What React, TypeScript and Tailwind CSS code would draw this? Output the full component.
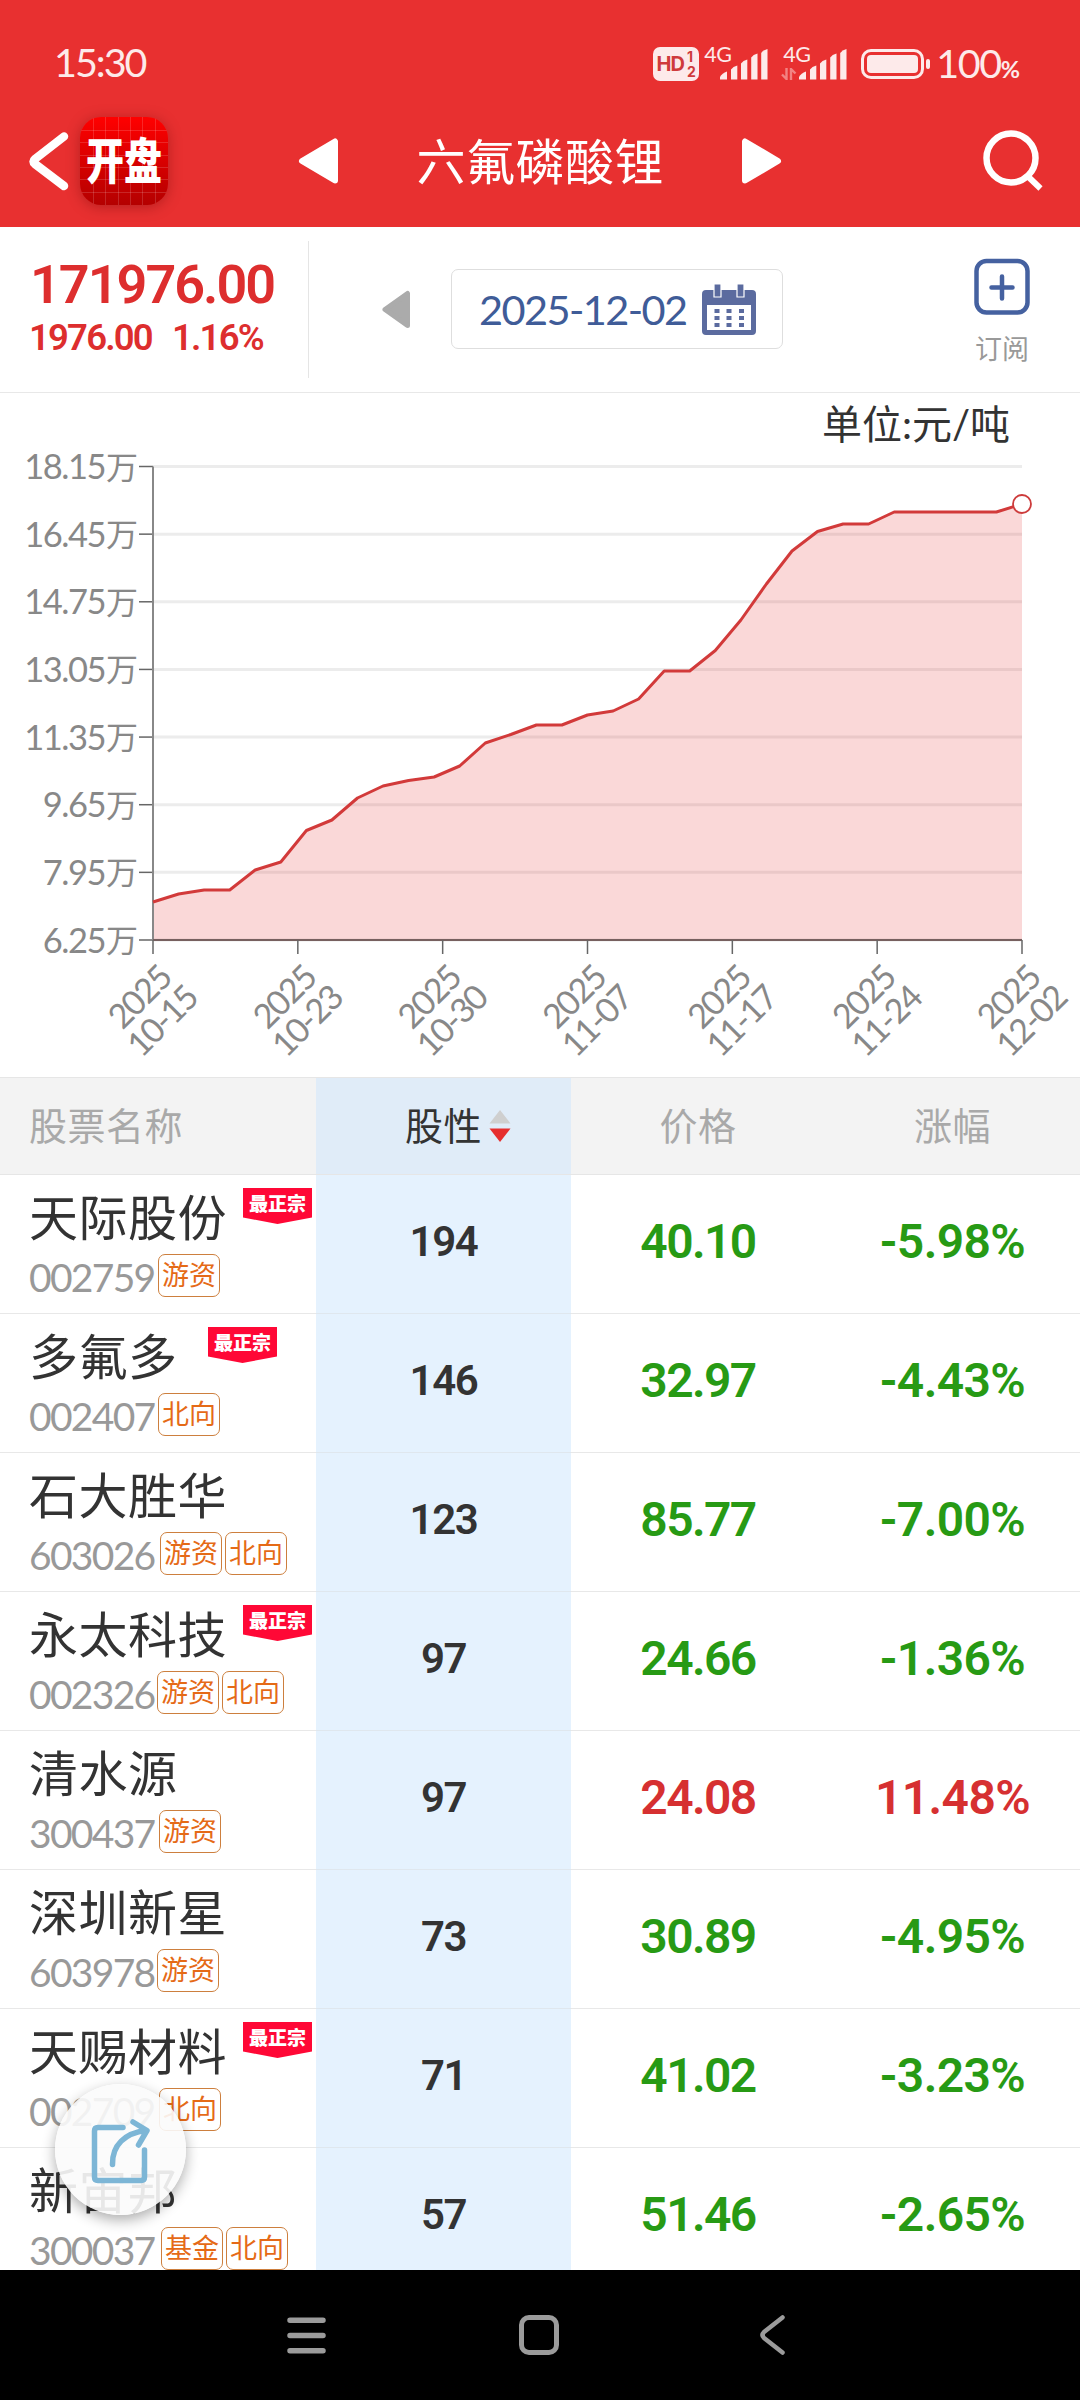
import React from 'react';

type Stock = {
  name: string;
  code: string;
  codeWidth: string;
  tags: string[];
  score: number;
  price: string;
  change: string;
  badge?: string;
};

const stocks: Stock[] = [
  { name: '天际股份', code: '002759', codeWidth: 'w-[129px]', tags: ['游资'], score: 194, price: '40.10', change: '-5.98%', badge: 'left-[243px]' },
  { name: '多氟多', code: '002407', codeWidth: 'w-[129px]', tags: ['北向'], score: 146, price: '32.97', change: '-4.43%', badge: 'left-[208px]' },
  { name: '石大胜华', code: '603026', codeWidth: 'w-[131px]', tags: ['游资', '北向'], score: 123, price: '85.77', change: '-7.00%' },
  { name: '永太科技', code: '002326', codeWidth: 'w-[128px]', tags: ['游资', '北向'], score: 97, price: '24.66', change: '-1.36%', badge: 'left-[243px]' },
  { name: '清水源', code: '300437', codeWidth: 'w-[130px]', tags: ['游资'], score: 97, price: '24.08', change: '11.48%' },
  { name: '深圳新星', code: '603978', codeWidth: 'w-[128px]', tags: ['游资'], score: 73, price: '30.89', change: '-4.95%' },
  { name: '天赐材料', code: '002709', codeWidth: 'w-[130px]', tags: ['北向'], score: 71, price: '41.02', change: '-3.23%', badge: 'left-[243px]' },
  { name: '新宙邦', code: '300037', codeWidth: 'w-[132px]', tags: ['基金', '北向'], score: 57, price: '51.46', change: '-2.65%' },
];

const yLabels = ['18.15', '16.45', '14.75', '13.05', '11.35', '9.65', '7.95', '6.25'];
const xLabels = ['10-15', '10-23', '10-30', '11-07', '11-17', '11-24', '12-02'];

const series = [
  902, 894, 890, 890, 870, 862, 830.5, 820, 798, 786, 780.5, 777, 766, 743, 734.5, 725, 725, 715, 711,
  699, 671, 671, 650.5, 620, 584, 551, 531.5, 524, 524, 512, 512, 512, 512, 512, 504,
];

const CHART_LEFT = 153;
const CHART_RIGHT = 1022;
const CHART_TOP = 466.5;
const CHART_BOTTOM = 940;

const SignalBars: React.FC = () => (
  <svg className="h-[31px] w-[48px]" viewBox="0 0 48 31" fill="#fdeaea">
    <path d="M0 30.5V28q2-4 7-5.500v8z" />
    <path d="M11 30.500V20.500q2-3 6.300-4v14z" />
    <path d="M21 30.500V14.500q2-3 6.300-4v20z" />
    <path d="M31.200 30.500V8.500q2-3 6.300-4v26z" />
    <path d="M41.200 30.500V4q2-3 6.300-4v30.500z" />
  </svg>
);

const StatusBar: React.FC = () => (
  <div className="flex h-[95px] items-center pt-[32px] pl-[54px] text-[#fdeaea]">
    <span className="-mt-[3px] text-[39.5px] leading-none tracking-[-2px]">15:30</span>
    <div className="ml-auto flex h-[34px] w-[46px] items-center justify-center rounded-[7px] bg-[#fdeaea] text-[#cf3b3c]">
      <span className="font-[Inter] text-[20px] leading-none font-bold tracking-[-1px]">HD</span>
      <span className="ml-[3px] flex flex-col font-[Inter] text-[14px] leading-[15px] font-bold">
        <span>1</span>
        <span>2</span>
      </span>
    </div>
    <div className="relative ml-[21px] h-[34px] w-[48px]">
      <span className="absolute -top-[2px] -left-[16px] text-[21.5px] leading-[19px] tracking-[-0.5px]">4G</span>
      <div className="pt-[2px]"><SignalBars /></div>
    </div>
    <div className="relative ml-[31px] h-[34px] w-[48px]">
      <span className="absolute -top-[2px] -left-[16px] text-[21.5px] leading-[19px] tracking-[-0.5px]">4G</span>
      <svg className="absolute top-[21px] -left-[18px] h-[12px] w-[16px]" viewBox="0 0 16 12" fill="none" stroke="#f28383" strokeWidth="2.400">
        <path d="M5.500 0v11L1 6.500M10 12V1l4.500 4.500" />
      </svg>
      <div className="pt-[2px]"><SignalBars /></div>
    </div>
    <div className="ml-[14px] flex h-[30px] w-[63px] rounded-[10px] border-[3px] border-[#fdeaea] p-[3px]">
      <div className="flex-1 rounded-[4px] bg-[#fdeaea]" />
    </div>
    <div className="ml-[2px] h-[10px] w-[4px] rounded-full bg-[#fdeaea]" />
    <div className="-mt-[2px] mr-[60px] ml-[6px] flex items-baseline leading-none">
      <span className="text-[39.5px] tracking-[-1.4px]">100</span>
      <span className="font-[Lato] text-[23.5px] font-bold">%</span>
    </div>
  </div>
);

const AppIcon: React.FC = () => (
  <div className="relative flex h-[88px] w-[88px] items-center justify-center overflow-hidden rounded-[21px] bg-linear-to-b from-[#ff0000] to-[#b40000] shadow-[0_2px_14px_rgba(90,0,0,0.35)]">
    <svg className="absolute inset-0 h-full w-full" viewBox="0 0 88 88" stroke="#ffffff" strokeOpacity="0.15" strokeWidth="1">
      <path d="M13.500 0v88M25.500 0v88M38.500 0v88M50.500 0v88M62.500 0v88M75.500 0v88M0 13.500h88M0 25.500h88M0 38.500h88M0 50.500h88M0 62.500h88M0 75.500h88" />
    </svg>
    <span className="relative -mt-[2px] scale-y-[1.28] text-[38px] leading-none font-black whitespace-nowrap text-white">开盘</span>
  </div>
);

const TitleBar: React.FC = () => (
  <div className="flex h-[132px] items-center pl-[28px] text-white">
    <svg className="h-[60px] w-[42px]" viewBox="0 0 42 60" fill="none" stroke="currentColor" strokeWidth="8.500" strokeLinecap="round" strokeLinejoin="round">
      <path d="M36 5.500L7 28q-3 2.500 0 5L36 55" />
    </svg>
    <div className="ml-[10px]"><AppIcon /></div>
    <svg className="ml-[130px] h-[48px] w-[41px]" viewBox="0 0 41 48" fill="currentColor" stroke="currentColor" strokeWidth="6" strokeLinejoin="round">
      <path d="M37 4.500v39L4 24z" />
    </svg>
    <span className="ml-[77.500px] text-[49px] leading-none tracking-[0.5px]">六氟磷酸锂</span>
    <svg className="ml-[77px] h-[48px] w-[41px]" viewBox="0 0 41 48" fill="currentColor" stroke="currentColor" strokeWidth="6" strokeLinejoin="round">
      <path d="M4 4.500v39L37 24z" />
    </svg>
    <svg className="mr-[36px] ml-auto h-[62px] w-[62px]" viewBox="0 0 62 62" fill="none" stroke="currentColor" strokeWidth="6.500">
      <circle cx="29" cy="28" r="24.500" />
      <path d="M46 46.500L58.500 58.500" strokeWidth="6" />
    </svg>
  </div>
);

const QuoteBar: React.FC = () => (
  <div className="flex h-[166px] border-b border-[#e8e8e8] bg-white">
    <div className="mt-[14px] h-[137px] w-[309px] border-r border-[#e5e5e5] pl-[30px] text-[#dd2e2e]">
      <div className="mt-[16px] font-[Roboto] text-[54px] leading-[56px] font-semibold tracking-[-2px]">171976.00</div>
      <div className="mt-[5px] -ml-px flex gap-[24px] font-[Roboto] text-[36.500px] leading-[40px] font-semibold tracking-[-1.800px]">
        <span className="w-[119px]">1976.00</span>
        <span>1.16%</span>
      </div>
    </div>
    <svg className="mt-[63px] ml-[73px] h-[39px] w-[28px]" viewBox="0 0 28 39" fill="#ababab" stroke="#ababab" strokeWidth="5" strokeLinejoin="round">
      <path d="M25.500 3.500v32L3 19.500z" />
    </svg>
    <div className="mt-[42px] ml-[41px] flex h-[80px] w-[332px] items-center rounded-[7px] border border-[#dedede] pl-[27px]">
      <span className="w-[223px] pt-px text-[41.500px] leading-none tracking-[-1.600px] text-[#3f5c98]">2025-12-02</span>
      <svg className="h-[52px] w-[54px]" viewBox="0 0 54 52" fill="#5b6b9f">
        <path fillRule="evenodd" d="M4 7h46q4 0 4 4v37q0 4-4 4H4q-4 0-4-4V11q0-4 4-4zM5 22v25h44V22z" />
        <path d="M12 1h7v13h-7zM35 1h7v13h-7z" stroke="#ffffff" strokeWidth="1.200" />
        <path d="M12.500 26h5v4h-5zM24.500 26h5v4h-5zM37 26h5v4h-5zM12.500 33h5v4h-5zM24.500 33h5v4h-5zM37 33h5v4h-5zM12.500 40h5v4h-5zM24.500 40h5v4h-5zM37 40h5v4h-5z" />
      </svg>
    </div>
    <div className="mt-[31px] mr-[50px] ml-auto flex flex-col items-center">
      <svg className="h-[57px] w-[56px]" viewBox="0 0 56 57" fill="none" stroke="#4561a0" strokeWidth="4.500" strokeLinecap="round">
        <rect x="2.500" y="3" width="51" height="51.500" rx="10" />
        <path d="M28 18.500v22M17.500 29.500h21" />
      </svg>
      <span className="mt-[20px] text-[27px] leading-[27px] text-[#999999]">订阅</span>
    </div>
  </div>
);

const PriceChart: React.FC = () => {
  const stepX = (CHART_RIGHT - CHART_LEFT) / (series.length - 1);
  const stepY = (CHART_BOTTOM - CHART_TOP) / (yLabels.length - 1);
  const tickX = (CHART_RIGHT - CHART_LEFT) / (xLabels.length - 1);
  const line = series.map((y, i) => `${(CHART_LEFT + i * stepX).toFixed(1)},${y}`).join(' ');

  return (
    <div className="h-[684px] bg-white">
      <div className="h-[50px] pt-[9px] pr-[70px] text-right text-[40px] leading-[44px] text-[#333333]">单位:元/吨</div>
      <svg className="block h-[634px] w-full" viewBox="0 443 1080 634">
        {yLabels.map((label, i) => (
          <g key={label}>
            <path d={`M${CHART_LEFT} ${CHART_TOP + i * stepY}H${CHART_RIGHT}`} stroke="#ececec" strokeWidth="3" />
            <path d={`M139 ${CHART_TOP + i * stepY}H${CHART_LEFT}`} stroke="#666666" strokeWidth="1.500" />
            <text x="105" y={CHART_TOP + i * stepY + 12.5} textAnchor="end" fontSize="34.500" letterSpacing="-1.500" fill="#888888">{label}</text>
            <text x="106" y={CHART_TOP + i * stepY + 12} fontSize="32" fill="#888888">万</text>
          </g>
        ))}
        <polygon points={`${CHART_LEFT},${CHART_BOTTOM} ${line} ${CHART_RIGHT},${CHART_BOTTOM}`} fill="#e23232" fillOpacity="0.190" />
        <path d={`M${CHART_LEFT} ${CHART_TOP}V${CHART_BOTTOM}`} stroke="#888888" strokeWidth="2" />
        <path d={`M${CHART_LEFT} ${CHART_BOTTOM}H${CHART_RIGHT}`} stroke="#77605f" strokeWidth="2" />
        <polyline points={line} fill="none" stroke="#d23a3a" strokeWidth="3" strokeLinejoin="round" />
        <circle cx={CHART_RIGHT} cy={series[series.length - 1]} r="9" fill="#ffffff" stroke="#cd3b3b" strokeWidth="1.800" />
        {xLabels.map((label, i) => (
          <g key={label}>
            <path d={`M${CHART_LEFT + i * tickX} ${CHART_BOTTOM}v14`} stroke="#666666" strokeWidth="1.500" />
            <g transform={`translate(${CHART_LEFT + i * tickX - 1.5} 1009) rotate(-45)`} textAnchor="middle" fontSize="34" letterSpacing="-1.800" fill="#888888">
              <text y="-5">2025</text>
              <text x="-1" y="28">{label}</text>
            </g>
          </g>
        ))}
      </svg>
    </div>
  );
};

const TableHead: React.FC = () => (
  <div className="flex h-[98px] border-y border-[#e6e6e6] bg-[#f3f3f3] text-[38px] leading-[94px] tracking-[0.5px] text-[#a9a9a9]">
    <div className="w-[316px] pl-[29px]">股票名称</div>
    <div className="flex w-[255px] items-center bg-[#e0ecf8] pl-[89px] text-[#333333]">
      <span className="-mt-[2px]">股性</span>
      <svg className="ml-[7px] h-[32px] w-[22px]" viewBox="0 0 22 32">
        <path d="M11 0l10.500 13.500H.5z" fill="#cfcfcf" />
        <path d="M11 32L.5 18.500h21z" fill="#e62e2e" />
      </svg>
    </div>
    <div className="w-[254px] text-center">价格</div>
    <div className="w-[255px] text-center">涨幅</div>
  </div>
);

const StockRow: React.FC<{ stock: Stock }> = ({ stock }) => {
  const color = stock.change.startsWith('-') ? 'text-[#279a14]' : 'text-[#d63031]';

  return (
    <div className="relative flex h-[139px] border-b border-[#e8e8e8]">
      <div className="w-[316px] pl-[29px]">
        <div className="mt-[16px] text-[49px] leading-[52px] tracking-[0.500px] whitespace-nowrap text-[#333333]">{stock.name}</div>
        <div className="mt-[11px] flex gap-[3px]">
          <span className={`${stock.codeWidth} -mr-[3px] pt-[3px] text-[39px] leading-[41px] tracking-[-1.700px] text-[#999999]`}>{stock.code}</span>
          {stock.tags.map((tag) => (
            <span key={tag} className="h-[43px] w-[62px] rounded-[7px] border border-[#cd7f3e] text-center text-[27px] leading-[40px] text-[#e56a17]">{tag}</span>
          ))}
        </div>
      </div>
      <div className="-mb-px flex w-[255px] border-b border-[#dfe7ee] bg-[#e5f2fe] font-[Roboto] text-[42px] font-semibold tracking-[-1.400px] text-[#333333]">
        <span className="mt-[42px] w-full text-center leading-[50px]">{stock.score}</span>
      </div>
      <div className={`mt-[41px] w-[254px] text-center font-[Roboto] text-[48px] leading-[52px] font-semibold tracking-[-1.600px] ${color}`}>{stock.price}</div>
      <div className={`mt-[41px] w-[255px] text-center font-[Roboto] text-[48px] leading-[52px] font-semibold tracking-[-0.600px] ${color}`}>{stock.change}</div>
      {stock.badge && (
        <div className={`absolute top-[13px] h-[36px] w-[69px] bg-[#ff0836] pt-[4px] text-center text-[19px] leading-[24px] font-black text-white [clip-path:polygon(0_0,100%_0,100%_82%,50%_100%,0_82%)] ${stock.badge}`}>
          最正宗
        </div>
      )}
    </div>
  );
};

const ShareButton: React.FC = () => (
  <div className="absolute top-[2084px] left-[55px] flex h-[131px] w-[131px] items-center justify-center rounded-full bg-[#fbfbfb]/90 shadow-[0_5px_14px_rgba(0,0,0,0.32)]">
    <svg className="h-[131px] w-[131px]" viewBox="0 0 131 131" fill="none" stroke="#7db6d6" strokeWidth="5.500" strokeLinecap="round" strokeLinejoin="round">
      <path d="M68 43.500H43q-3.500 0-3.500 3.500v46q0 3.500 3.500 3.500h43q3.500 0 3.500-3.500V66" />
      <path d="M57.500 80.500C57 61 70 49 91 46.500M78 38l14 8.500L83.500 61" />
    </svg>
  </div>
);

const NavigationBar: React.FC = () => (
  <div className="flex h-[130px] items-center bg-black pl-[287px] text-[#9b9b9b]">
    <svg className="h-[39px] w-[39px]" viewBox="0 0 39 39" stroke="currentColor" strokeWidth="5.500" strokeLinecap="round">
      <path d="M3 4.200h33M3 19.500h33M3 34.800h33" />
    </svg>
    <svg className="ml-[192px] h-[42px] w-[42px]" viewBox="0 0 42 42" fill="none" stroke="currentColor" strokeWidth="5">
      <rect x="3.500" y="3.500" width="35" height="35" rx="7.500" />
    </svg>
    <svg className="ml-[198px] h-[42px] w-[30px]" viewBox="0 0 30 42" fill="none" stroke="currentColor" strokeWidth="4.500" strokeLinecap="round" strokeLinejoin="round">
      <path d="M24.500 3.500L6 18q-3 3 0 6L24.500 38.500" />
    </svg>
  </div>
);

const App: React.FC = () => {
  return (
    <div className="relative h-[2400px] w-[1080px] overflow-hidden bg-white font-[Lato,'Noto_Sans_CJK_SC',sans-serif]">
      <header className="h-[227px] bg-[#e83030]">
        <StatusBar />
        <TitleBar />
      </header>
      <main>
        <QuoteBar />
        <PriceChart />
        <TableHead />
        <div className="h-[1095px] overflow-hidden">
          {stocks.map((stock) => (
            <StockRow key={stock.code} stock={stock} />
          ))}
        </div>
      </main>
      <NavigationBar />
      <ShareButton />
    </div>
  );
};

export default App;
